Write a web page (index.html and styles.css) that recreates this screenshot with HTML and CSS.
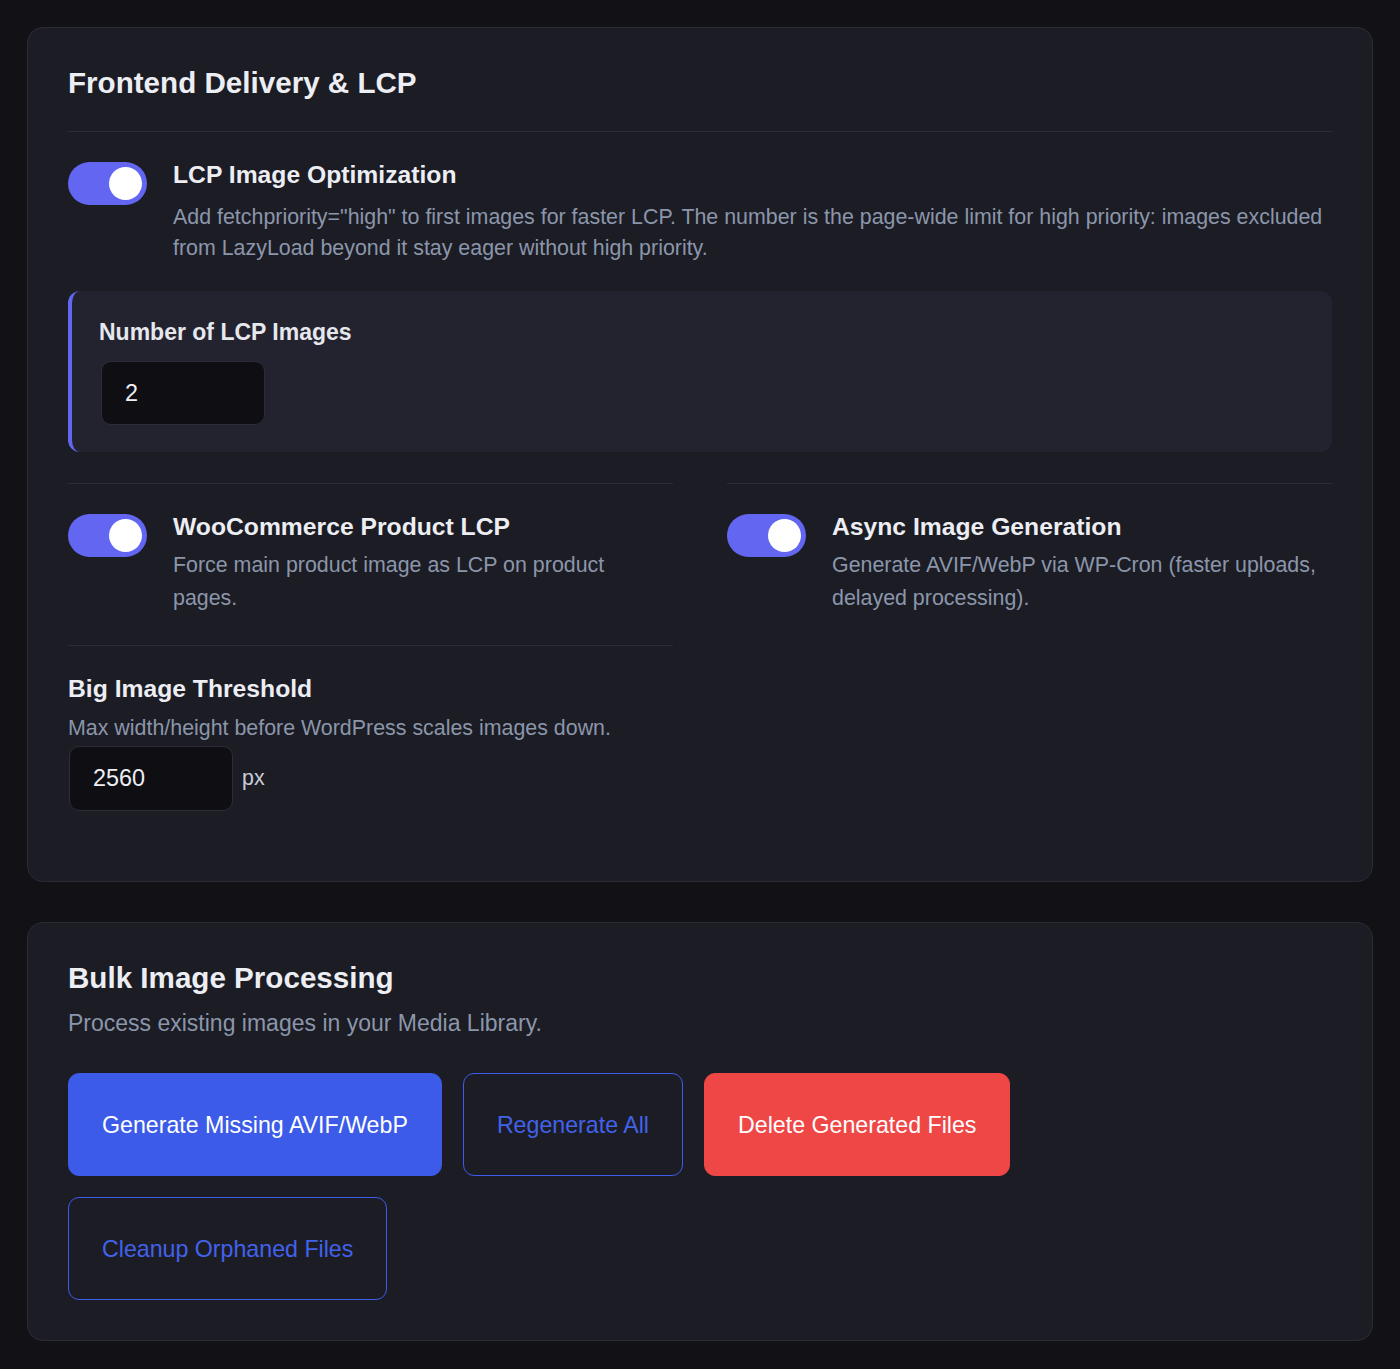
FILE: index.html
```html
<!DOCTYPE html>
<html lang="en">
<head>
<meta charset="utf-8">
<title>Settings</title>
<link rel="stylesheet" href="styles.css">
</head>
<body>
<main class="page">
  <section class="card">
    <h2 class="card-title with-divider">Frontend Delivery &amp; LCP</h2>

    <div class="setting first">
      <span class="toggle"><span class="knob"></span></span>
      <div class="setting-text">
        <div class="setting-label">LCP Image Optimization</div>
        <p class="setting-desc tight">Add fetchpriority="high" to first images for faster LCP. The number is the page-wide limit for high priority: images excluded from LazyLoad beyond it stay eager without high priority.</p>
      </div>
    </div>

    <div class="subpanel">
      <div class="subpanel-label">Number of LCP Images</div>
      <div class="field">2</div>
    </div>

    <div class="grid">
      <div class="setting cell">
        <span class="toggle"><span class="knob"></span></span>
        <div class="setting-text">
          <div class="setting-label">WooCommerce Product LCP</div>
          <p class="setting-desc">Force main product image as LCP on product pages.</p>
        </div>
      </div>
      <div class="setting cell">
        <span class="toggle"><span class="knob"></span></span>
        <div class="setting-text">
          <div class="setting-label">Async Image Generation</div>
          <p class="setting-desc">Generate AVIF/WebP via WP-Cron (faster uploads, delayed processing).</p>
        </div>
      </div>
      <div class="cell threshold">
        <div class="setting-label">Big Image Threshold</div>
        <p class="setting-desc single">Max width/height before WordPress scales images down.</p>
        <div class="field-row">
          <div class="field wide">2560</div>
          <span class="unit">px</span>
        </div>
      </div>
    </div>
  </section>

  <section class="card">
    <h2 class="card-title">Bulk Image Processing</h2>
    <p class="card-desc">Process existing images in your Media Library.</p>
    <div class="actions">
      <button class="btn btn-primary">Generate Missing AVIF/WebP</button>
      <button class="btn btn-outline">Regenerate All</button>
      <button class="btn btn-danger">Delete Generated Files</button>
      <button class="btn btn-outline">Cleanup Orphaned Files</button>
    </div>
  </section>
</main>
</body>
</html>
```
FILE: styles.css
```css
* { box-sizing: border-box; }

html, body {
  margin: 0;
  background: #111116;
}

body {
  font-family: "Liberation Sans", Arial, sans-serif;
  color: #e6e8ee;
}

.page {
  padding: 27px 27px 28px;
  display: flex;
  flex-direction: column;
  gap: 40px;
}

.card {
  background: #1c1c25;
  border: 1px solid #2b2b38;
  border-radius: 16px;
  padding: 40px;
}

.card-title {
  margin: 0;
  font-size: 29.6px;
  line-height: 29px;
  font-weight: 700;
  color: #eceef3;
}

.card-title.with-divider {
  padding-bottom: 34px;
  border-bottom: 1px solid #2c2c39;
}

.setting {
  display: flex;
  align-items: flex-start;
  gap: 26px;
  padding: 31px 0 29px;
}

.setting.first {
  padding: 30px 0 27px;
}

.toggle {
  flex: none;
  width: 79px;
  height: 43px;
  border-radius: 22px;
  background: #6366f1;
  display: flex;
  align-items: center;
  justify-content: flex-end;
  padding-right: 5px;
}

.knob {
  width: 33px;
  height: 33px;
  border-radius: 50%;
  background: #ffffff;
}

.setting-text {
  flex: 1;
  min-width: 0;
}

.setting-label {
  font-size: 24.7px;
  line-height: 26px;
  font-weight: 700;
  color: #eceef3;
}

.setting-desc {
  margin: 9px 0 0;
  font-size: 21.4px;
  line-height: 33px;
  color: #8b96aa;
}

.setting-desc.tight {
  margin-top: 14px;
  line-height: 31px;
}

.subpanel {
  background: #23232f;
  border-left: 4px solid #6366f1;
  border-radius: 12px;
  padding: 27px 27px 27px;
}

.subpanel-label {
  font-size: 23px;
  line-height: 28px;
  font-weight: 700;
  color: #e6e8ee;
  margin-bottom: 15px;
}

.field {
  width: 164px;
  height: 64px;
  margin-left: 2px;
  background: #0f0f13;
  border: 1px solid #2c2c3a;
  border-radius: 10px;
  padding: 0 23px;
  display: flex;
  align-items: center;
  font-size: 23.4px;
  color: #eceef3;
}

.field.wide {
  width: 164px;
  height: 65px;
  margin-left: 1px;
}

.grid {
  margin-top: 31px;
  display: grid;
  grid-template-columns: 1fr 1fr;
  column-gap: 54px;
}

.cell {
  border-top: 1px solid #2c2c39;
}

.setting.cell {
  padding: 30px 0 30px;
}

.threshold {
  padding: 31px 0 30px;
}

.threshold .setting-label {
  line-height: 24px;
}

.setting-desc.single {
  margin-top: 12px;
  line-height: 31px;
}

.field-row {
  margin-top: 2px;
  display: flex;
  align-items: center;
  gap: 9px;
}

.unit {
  font-size: 21.4px;
  color: #c9cdd6;
}

.card-desc {
  margin: 14px 0 0;
  font-size: 23px;
  line-height: 34px;
  color: #8b96aa;
}

.actions {
  margin-top: 33px;
  display: flex;
  flex-wrap: wrap;
  gap: 21px;
  max-width: 960px;
}

.btn {
  font-family: "Liberation Sans", Arial, sans-serif;
  font-size: 23.2px;
  line-height: 26px;
  padding: 38px 33px 37px;
  border-radius: 11px;
  border: 1.5px solid transparent;
  cursor: pointer;
}

.btn-primary {
  background: #3b5be8;
  border-color: #3b5be8;
  color: #ffffff;
}

.btn-outline {
  background: transparent;
  border-color: #3b5be8;
  color: #4262ea;
}

.btn-danger {
  background: #ef4646;
  border-color: #ef4646;
  color: #ffffff;
}
```
